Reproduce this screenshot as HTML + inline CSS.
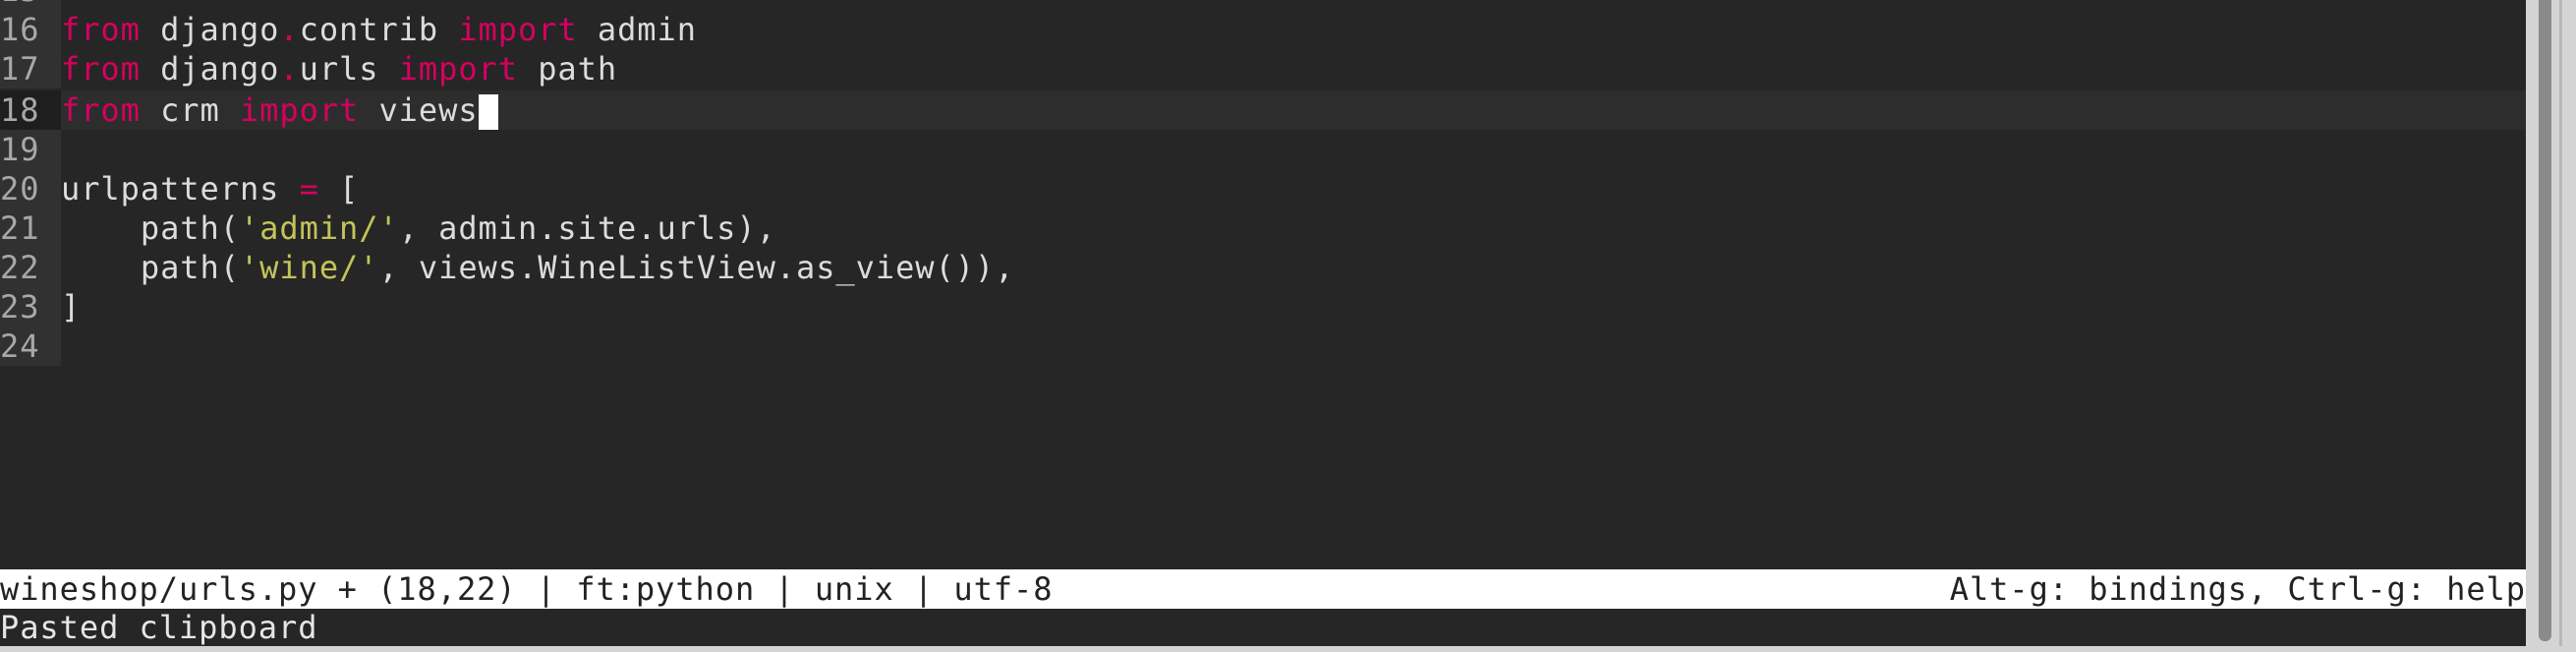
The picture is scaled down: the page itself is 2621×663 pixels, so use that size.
<!DOCTYPE html>
<html><head><meta charset="utf-8"><style>
html,body{margin:0;padding:0;}
body{width:2621px;height:663px;background:#262626;position:relative;overflow:hidden;font-family:"DejaVu Sans Mono","Liberation Mono",monospace;font-size:32px;letter-spacing:0.95px;}
.ln{position:absolute;left:0;height:40px;line-height:40px;white-space:pre;color:#dcdcdc;width:2570px;}
.g{display:inline-block;width:62px;background:#313131;color:#a8a8a8;vertical-align:top;}
.cur{background:#2d2d2d;}
.cur .g{background:#1e1e1e;}
.k{color:#d7005f}
.s{color:#c3c35a}
.c{display:inline-block;width:20px;height:36px;background:#fff;vertical-align:middle;}
#status{position:absolute;left:0;top:579px;width:2570px;height:40px;line-height:40px;background:#fff;color:#222;white-space:pre;}
#status .r{position:absolute;right:0;top:0;}
#msg{position:absolute;left:0;top:619px;width:2570px;height:38px;line-height:38px;color:#e6e6e6;white-space:pre;}
#sb{position:absolute;left:2570px;top:0;width:51px;height:663px;background:#d4d4d4;}
#thumb{position:absolute;left:2583px;top:0;width:13px;height:652px;background:#8a8a8a;border-radius:0 0 6px 6px;}
#bot{position:absolute;left:0;top:657px;width:2621px;height:6px;background:#d4d4d4;}
#edge{position:absolute;left:2604px;top:0;width:3px;height:663px;background:#b8b8b8;}
</style></head><body>
<div class="ln" style="top:-30px"><span class="g">15</span></div>
<div class="ln" style="top:10px"><span class="g">16</span><span class="k">from</span> django<span class="k">.</span>contrib <span class="k">import</span> admin</div>
<div class="ln" style="top:50px"><span class="g">17</span><span class="k">from</span> django<span class="k">.</span>urls <span class="k">import</span> path</div>
<div class="ln cur" style="top:92px"><span class="g">18</span><span class="k">from</span> crm <span class="k">import</span> views<span class="c"></span></div>
<div class="ln" style="top:132px"><span class="g">19</span></div>
<div class="ln" style="top:172px"><span class="g">20</span>urlpatterns <span class="k">=</span> [</div>
<div class="ln" style="top:212px"><span class="g">21</span>    path(<span class="s">'admin/'</span>, admin.site.urls),</div>
<div class="ln" style="top:252px"><span class="g">22</span>    path(<span class="s">'wine/'</span>, views.WineListView.as_view()),</div>
<div class="ln" style="top:292px"><span class="g">23</span>]</div>
<div class="ln" style="top:332px"><span class="g">24</span></div>
<div id="status">wineshop/urls.py + (18,22) | ft:python | unix | utf-8<span class="r">Alt-g: bindings, Ctrl-g: help</span></div>
<div id="msg">Pasted clipboard</div>
<div id="sb"></div>
<div id="thumb"></div>
<div id="edge"></div>
<div id="bot"></div>
</body></html>
